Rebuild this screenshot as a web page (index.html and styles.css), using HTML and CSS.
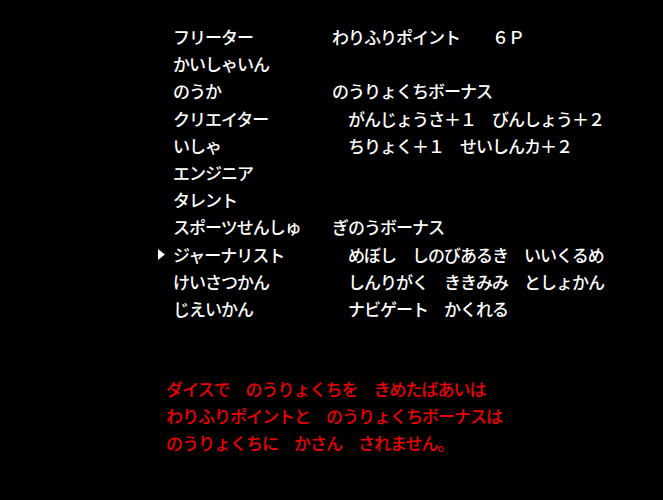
FILE: index.html
```html
<!DOCTYPE html>
<html lang="ja">
<head>
<meta charset="utf-8">
<link rel="stylesheet" href="styles.css">
</head>
<body>
<main class="screen">
  <section class="menu">
    <div class="row"><span class="cursor"></span><span class="job">フリーター</span><span class="info">わりふりポイント　　６Ｐ</span></div>
    <div class="row"><span class="cursor"></span><span class="job">かいしゃいん</span><span class="info"></span></div>
    <div class="row"><span class="cursor"></span><span class="job">のうか</span><span class="info">のうりょくちボーナス</span></div>
    <div class="row"><span class="cursor"></span><span class="job">クリエイター</span><span class="info">　がんじょうさ＋１　びんしょう＋２</span></div>
    <div class="row"><span class="cursor"></span><span class="job">いしゃ</span><span class="info">　ちりょく＋１　せいしんカ＋２</span></div>
    <div class="row"><span class="cursor"></span><span class="job">エンジニア</span><span class="info"></span></div>
    <div class="row"><span class="cursor"></span><span class="job">タレント</span><span class="info"></span></div>
    <div class="row"><span class="cursor"></span><span class="job">スポーツせんしゅ</span><span class="info">ぎのうボーナス</span></div>
    <div class="row selected"><span class="cursor"><svg class="arrow" width="7" height="11" viewBox="0 0 7 11"><path d="M0 0 L7 5.5 L0 11 Z" fill="#fff"/></svg></span><span class="job">ジャーナリスト</span><span class="info">　めぼし　しのびあるき　いいくるめ</span></div>
    <div class="row"><span class="cursor"></span><span class="job">けいさつかん</span><span class="info">　しんりがく　ききみみ　としょかん</span></div>
    <div class="row"><span class="cursor"></span><span class="job">じえいかん</span><span class="info">　ナビゲート　かくれる</span></div>
  </section>
  <section class="note">
    <p>ダイスで　のうりょくちを　きめたばあいは</p>
    <p>わりふりポイントと　のうりょくちボーナスは</p>
    <p>のうりょくちに　かさん　されません。</p>
  </section>
</main>
</body>
</html>
```
FILE: styles.css
```css
html, body {
  margin: 0;
  padding: 0;
  background: #000;
}
body {
  width: 663px;
  height: 500px;
  overflow: hidden;
  font-family: "Noto Sans CJK JP", "Noto Sans", sans-serif;
  font-size: 17px;
  letter-spacing: -1px;
  font-weight: 500;
  color: #fff;
}
.screen {
  padding-top: 23px;
}
.menu {
  display: flex;
  flex-direction: column;
  padding-left: 158px;
}
.row {
  display: grid;
  grid-template-columns: 15px 159px 1fr;
  height: 27.2px;
  line-height: 27.2px;
  white-space: pre;
}
.cursor {
  display: flex;
  align-items: center;
}
.arrow {
  display: block;
  margin-top: 1px;
}
.note {
  margin-top: 53px;
  padding-left: 166px;
  color: #ee0000;
}
.note p {
  margin: 0;
  line-height: 27px;
  white-space: pre;
}
```
